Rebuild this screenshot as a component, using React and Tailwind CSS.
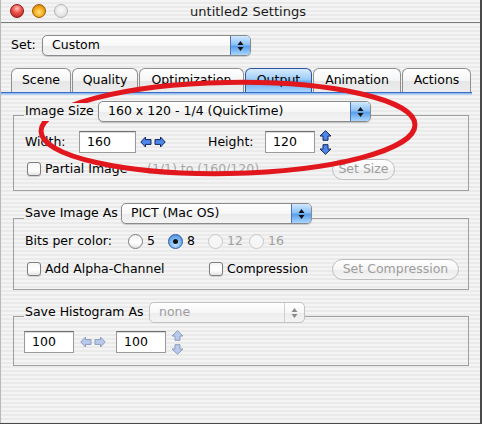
import React from "react";

const stripes =
  "bg-[repeating-linear-gradient(180deg,#f4f4f4_0px,#f4f4f4_2px,#eaeaea_2px,#eaeaea_4px)]";

function Triangles({ dim }) {
  return (
    <svg width="7" height="12" viewBox="0 0 7 12">
      <path d="M3.5 1 L6.5 5 L0.5 5 Z" fill={dim ? "#8a8a8a" : "#111"} />
      <path d="M3.5 11 L6.5 7 L0.5 7 Z" fill={dim ? "#8a8a8a" : "#111"} />
    </svg>
  );
}

function Popup({ text, className, disabled }) {
  return (
    <div
      className={`flex h-[21px] items-stretch overflow-hidden rounded-[5px] border ${
        disabled ? "border-[#c2c2c2] text-[#9c9c9c]" : "border-[#8a8a8a] text-black shadow-[0_1px_1px_rgba(0,0,0,0.18)]"
      } bg-[linear-gradient(180deg,#ffffff_0%,#f7f7f7_50%,#ececec_51%,#f4f4f4_100%)] ${className}`}
    >
      <div className="flex flex-1 items-center pl-[9px] leading-none">{text}</div>
      {disabled ? (
        <div className="flex w-[20px] items-center justify-center border-l border-[#cfcfcf]">
          <Triangles dim />
        </div>
      ) : (
        <div className="flex w-[20px] items-center justify-center border-l border-[#4b74b8] bg-[linear-gradient(180deg,#d2e8ff_0%,#8cc2f7_45%,#5a9fea_55%,#a9d6ff_100%)]">
          <Triangles />
        </div>
      )}
    </div>
  );
}

function Field({ value, className }) {
  return (
    <div
      className={`flex h-[22px] items-center border border-[#9a9a9a] border-t-[#6f6f6f] bg-white pl-[7px] shadow-[inset_0_1px_1px_rgba(0,0,0,0.15)] ${className}`}
    >
      {value}
    </div>
  );
}

function HArrows({ dim }) {
  const fill = dim ? "#b8c9ea" : "#4f86ea";
  const stroke = dim ? "#8d9dc0" : "#13265f";
  return (
    <div className="flex items-center gap-[2px]">
      <svg width="12" height="12" viewBox="0 0 12 12">
        <path d="M0.8 6 L5.5 1 L5.5 3.6 L11 3.6 L11 8.4 L5.5 8.4 L5.5 11 Z" fill={fill} stroke={stroke} strokeWidth="1" />
      </svg>
      <svg width="12" height="12" viewBox="0 0 12 12">
        <path d="M11.2 6 L6.5 1 L6.5 3.6 L1 3.6 L1 8.4 L6.5 8.4 L6.5 11 Z" fill={fill} stroke={stroke} strokeWidth="1" />
      </svg>
    </div>
  );
}

function VArrows({ dim }) {
  const fill = dim ? "#b8c9ea" : "#4f86ea";
  const stroke = dim ? "#8d9dc0" : "#13265f";
  return (
    <div className="flex flex-col gap-[3px]">
      <svg width="13" height="11" viewBox="0 0 13 11">
        <path d="M6.5 0.7 L12 6 L9 6 L9 10.3 L4 10.3 L4 6 L1 6 Z" fill={fill} stroke={stroke} strokeWidth="1" />
      </svg>
      <svg width="13" height="11" viewBox="0 0 13 11">
        <path d="M6.5 10.3 L12 5 L9 5 L9 0.7 L4 0.7 L4 5 L1 5 Z" fill={fill} stroke={stroke} strokeWidth="1" />
      </svg>
    </div>
  );
}

function Checkbox({ label, className }) {
  return (
    <div className={`flex items-center gap-[4px] ${className}`}>
      <div className="h-[14px] w-[14px] rounded-[3px] border border-[#7d7d7d] bg-[linear-gradient(180deg,#f6f6f6_0%,#ffffff_60%,#e4e4e4_100%)] shadow-[0_1px_1px_rgba(0,0,0,0.15)]" />
      <span>{label}</span>
    </div>
  );
}

function Radio({ label, checked, disabled, className }) {
  return (
    <div className={`flex items-center gap-[4px] ${disabled ? "text-[#a0a0a0]" : ""} ${className}`}>
      {checked ? (
        <div className="flex h-[15px] w-[15px] items-center justify-center rounded-full border border-[#34579a] bg-[radial-gradient(circle_at_50%_70%,#c4e4ff_0%,#6fb0f2_55%,#3d7fd6_100%)]">
          <div className="h-[5px] w-[5px] rounded-full bg-[#111]" />
        </div>
      ) : (
        <div
          className={`h-[15px] w-[15px] rounded-full border ${
            disabled ? "border-[#c8c8c8] bg-[#f6f6f6]" : "border-[#7d7d7d] bg-[linear-gradient(180deg,#f2f2f2_0%,#ffffff_60%,#e2e2e2_100%)]"
          }`}
        />
      )}
      <span>{label}</span>
    </div>
  );
}

function PillButton({ text, className }) {
  return (
    <div
      className={`flex h-[21px] items-center justify-center rounded-full border border-[#bdbdbd] bg-[linear-gradient(180deg,#ffffff_0%,#f6f6f6_50%,#ececec_51%,#f5f5f5_100%)] text-[#9d9d9d] ${className}`}
    >
      {text}
    </div>
  );
}

function Group({ label, labelW, popup, children, boxClass }) {
  return (
    <div className="ml-[12px] flex w-[456px] flex-col">
      <div className="relative z-10 flex items-center pl-[11px]">
        <div className={`${stripes} bg-fixed flex h-[18px] items-center pl-[1px] ${labelW}`}>{label}</div>
        {popup}
      </div>
      <div className={`border border-[#9f9f9f] ${boxClass}`}>{children}</div>
    </div>
  );
}

const tabs = [
  { name: "Scene", w: "w-[60px]" },
  { name: "Quality", w: "w-[66px]" },
  { name: "Optimization", w: "w-[105px]" },
  { name: "Output", w: "w-[67px]", active: true },
  { name: "Animation", w: "w-[88px]" },
  { name: "Actions", w: "w-[69px]" },
];

export default function App() {
  return (
    <div className="relative h-[424px] w-[482px] overflow-hidden bg-[#4a4a4a] font-['DejaVu_Sans',sans-serif] text-[12.5px] text-black">
      <div className={`${stripes} flex h-[423px] w-[480px] flex-col border-l border-[#b8b8b8]`}>
        {/* title bar */}
        <div className="relative flex h-[23px] shrink-0 items-center border-b border-[#7a7a7a]">
          <div className="flex items-center gap-[8px] pl-[9px]">
            <div className="h-[14px] w-[14px] rounded-full border border-[#8c1712] bg-[radial-gradient(circle_at_50%_30%,#ffc4bf_0%,#ec5a52_40%,#b1150f_100%)]" />
            <div className="h-[14px] w-[14px] rounded-full border border-[#9a5a00] bg-[radial-gradient(circle_at_50%_60%,#ffe57a_0%,#f4a91e_50%,#c07100_100%)]" />
            <div className="h-[14px] w-[14px] rounded-full border border-[#b4b4b4] bg-[radial-gradient(circle_at_50%_40%,#fbfbfb_0%,#e6e6e6_60%,#cfcfcf_100%)]" />
          </div>
          <div className="flex-1 pr-[52px] text-center text-[13px] leading-none text-[#1a1a1a]">untitled2 Settings</div>
        </div>

        {/* set row */}
        <div className="mt-[12px] flex items-center pl-[10px]">
          <span className="w-[31px]">Set:</span>
          <Popup text="Custom" className="w-[209px]" />
        </div>

        {/* tabs */}
        <div className="mt-[12px] flex h-[24px] items-end gap-[1px] pl-[10px]">
          {tabs.map((t) => (
            <div
              key={t.name}
              className={`flex h-[24px] items-center justify-center rounded-t-[6px] border border-b-0 ${t.w} ${
                t.active
                  ? "border-[#2f56a0] bg-[linear-gradient(180deg,#d8ecff_0%,#9ccbf7_45%,#68abef_55%,#a8d5ff_100%)]"
                  : "border-[#8f8f8f] bg-[linear-gradient(180deg,#ffffff_0%,#f5f5f5_50%,#e6e6e6_51%,#ececec_100%)]"
              }`}
            >
              {t.name}
            </div>
          ))}
        </div>
        <div className="h-[3px] w-[471px] border-t border-[#3c6cc4] bg-[linear-gradient(180deg,#7fb2ee,#c5def9)]" />

        {/* image size */}
        <div className="mt-[6px]">
          <Group
            label="Image Size"
            labelW="w-[74px]"
            popup={<Popup text="160 x 120 - 1/4 (QuickTime)" className="w-[273px]" />}
            boxClass="-mt-[7px] h-[76px] pl-[11px] pt-[15px]"
          >
            <div className="flex h-[22px] items-center">
              <span className="w-[54px]">Width:</span>
              <Field value="160" className="w-[57px]" />
              <div className="ml-[4px] w-[68px]">
                <HArrows />
              </div>
              <span className="w-[57px]">Height:</span>
              <Field value="120" className="w-[50px]" />
              <div className="ml-[4px]">
                <VArrows />
              </div>
            </div>
            <div className="mt-[5px] flex h-[22px] items-center">
              <Checkbox label="Partial Image" className="ml-[2px] w-[120px]" />
              <span className="w-[185px] text-[#a8a8a8]">(1/1) to (160/120)</span>
              <PillButton text="Set Size" className="w-[63px]" />
            </div>
          </Group>
        </div>

        {/* save image as */}
        <div className="mt-[12px]">
          <Group
            label="Save Image As"
            labelW="w-[97px]"
            popup={<Popup text="PICT (Mac OS)" className="w-[191px]" />}
            boxClass="-mt-[6px] h-[72px] pl-[11px] pt-[11px]"
          >
            <div className="flex h-[22px] items-center">
              <span className="w-[103px]">Bits per color:</span>
              <Radio label="5" className="w-[40px]" />
              <Radio label="8" checked className="w-[40px]" />
              <Radio label="12" disabled className="w-[41px]" />
              <Radio label="16" disabled />
            </div>
            <div className="mt-[6px] flex h-[22px] items-center">
              <Checkbox label="Add Alpha-Channel" className="ml-[2px] w-[182px]" />
              <Checkbox label="Compression" className="w-[123px]" />
              <PillButton text="Set Compression" className="w-[127px]" />
            </div>
          </Group>
        </div>

        {/* save histogram as */}
        <div className="mt-[12px]">
          <Group
            label="Save Histogram As"
            labelW="w-[125px]"
            popup={<Popup text="none" disabled className="w-[156px]" />}
            boxClass="-mt-[7px] h-[50px] pl-[10px] pt-[14px]"
          >
            <div className="flex h-[22px] items-center">
              <Field value="100" className="w-[50px]" />
              <div className="ml-[6px]">
                <HArrows dim />
              </div>
              <Field value="100" className="ml-[10px] w-[50px]" />
              <div className="ml-[5px]">
                <VArrows dim />
              </div>
            </div>
          </Group>
        </div>
      </div>

      {/* red annotation */}
      <svg className="pointer-events-none absolute left-0 top-0" width="482" height="424" viewBox="0 0 482 424">
        <ellipse cx="228" cy="128" rx="187" ry="45.5" fill="none" stroke="#e2161d" strokeWidth="5" transform="rotate(-1 228 128)" />
      </svg>
    </div>
  );
}
